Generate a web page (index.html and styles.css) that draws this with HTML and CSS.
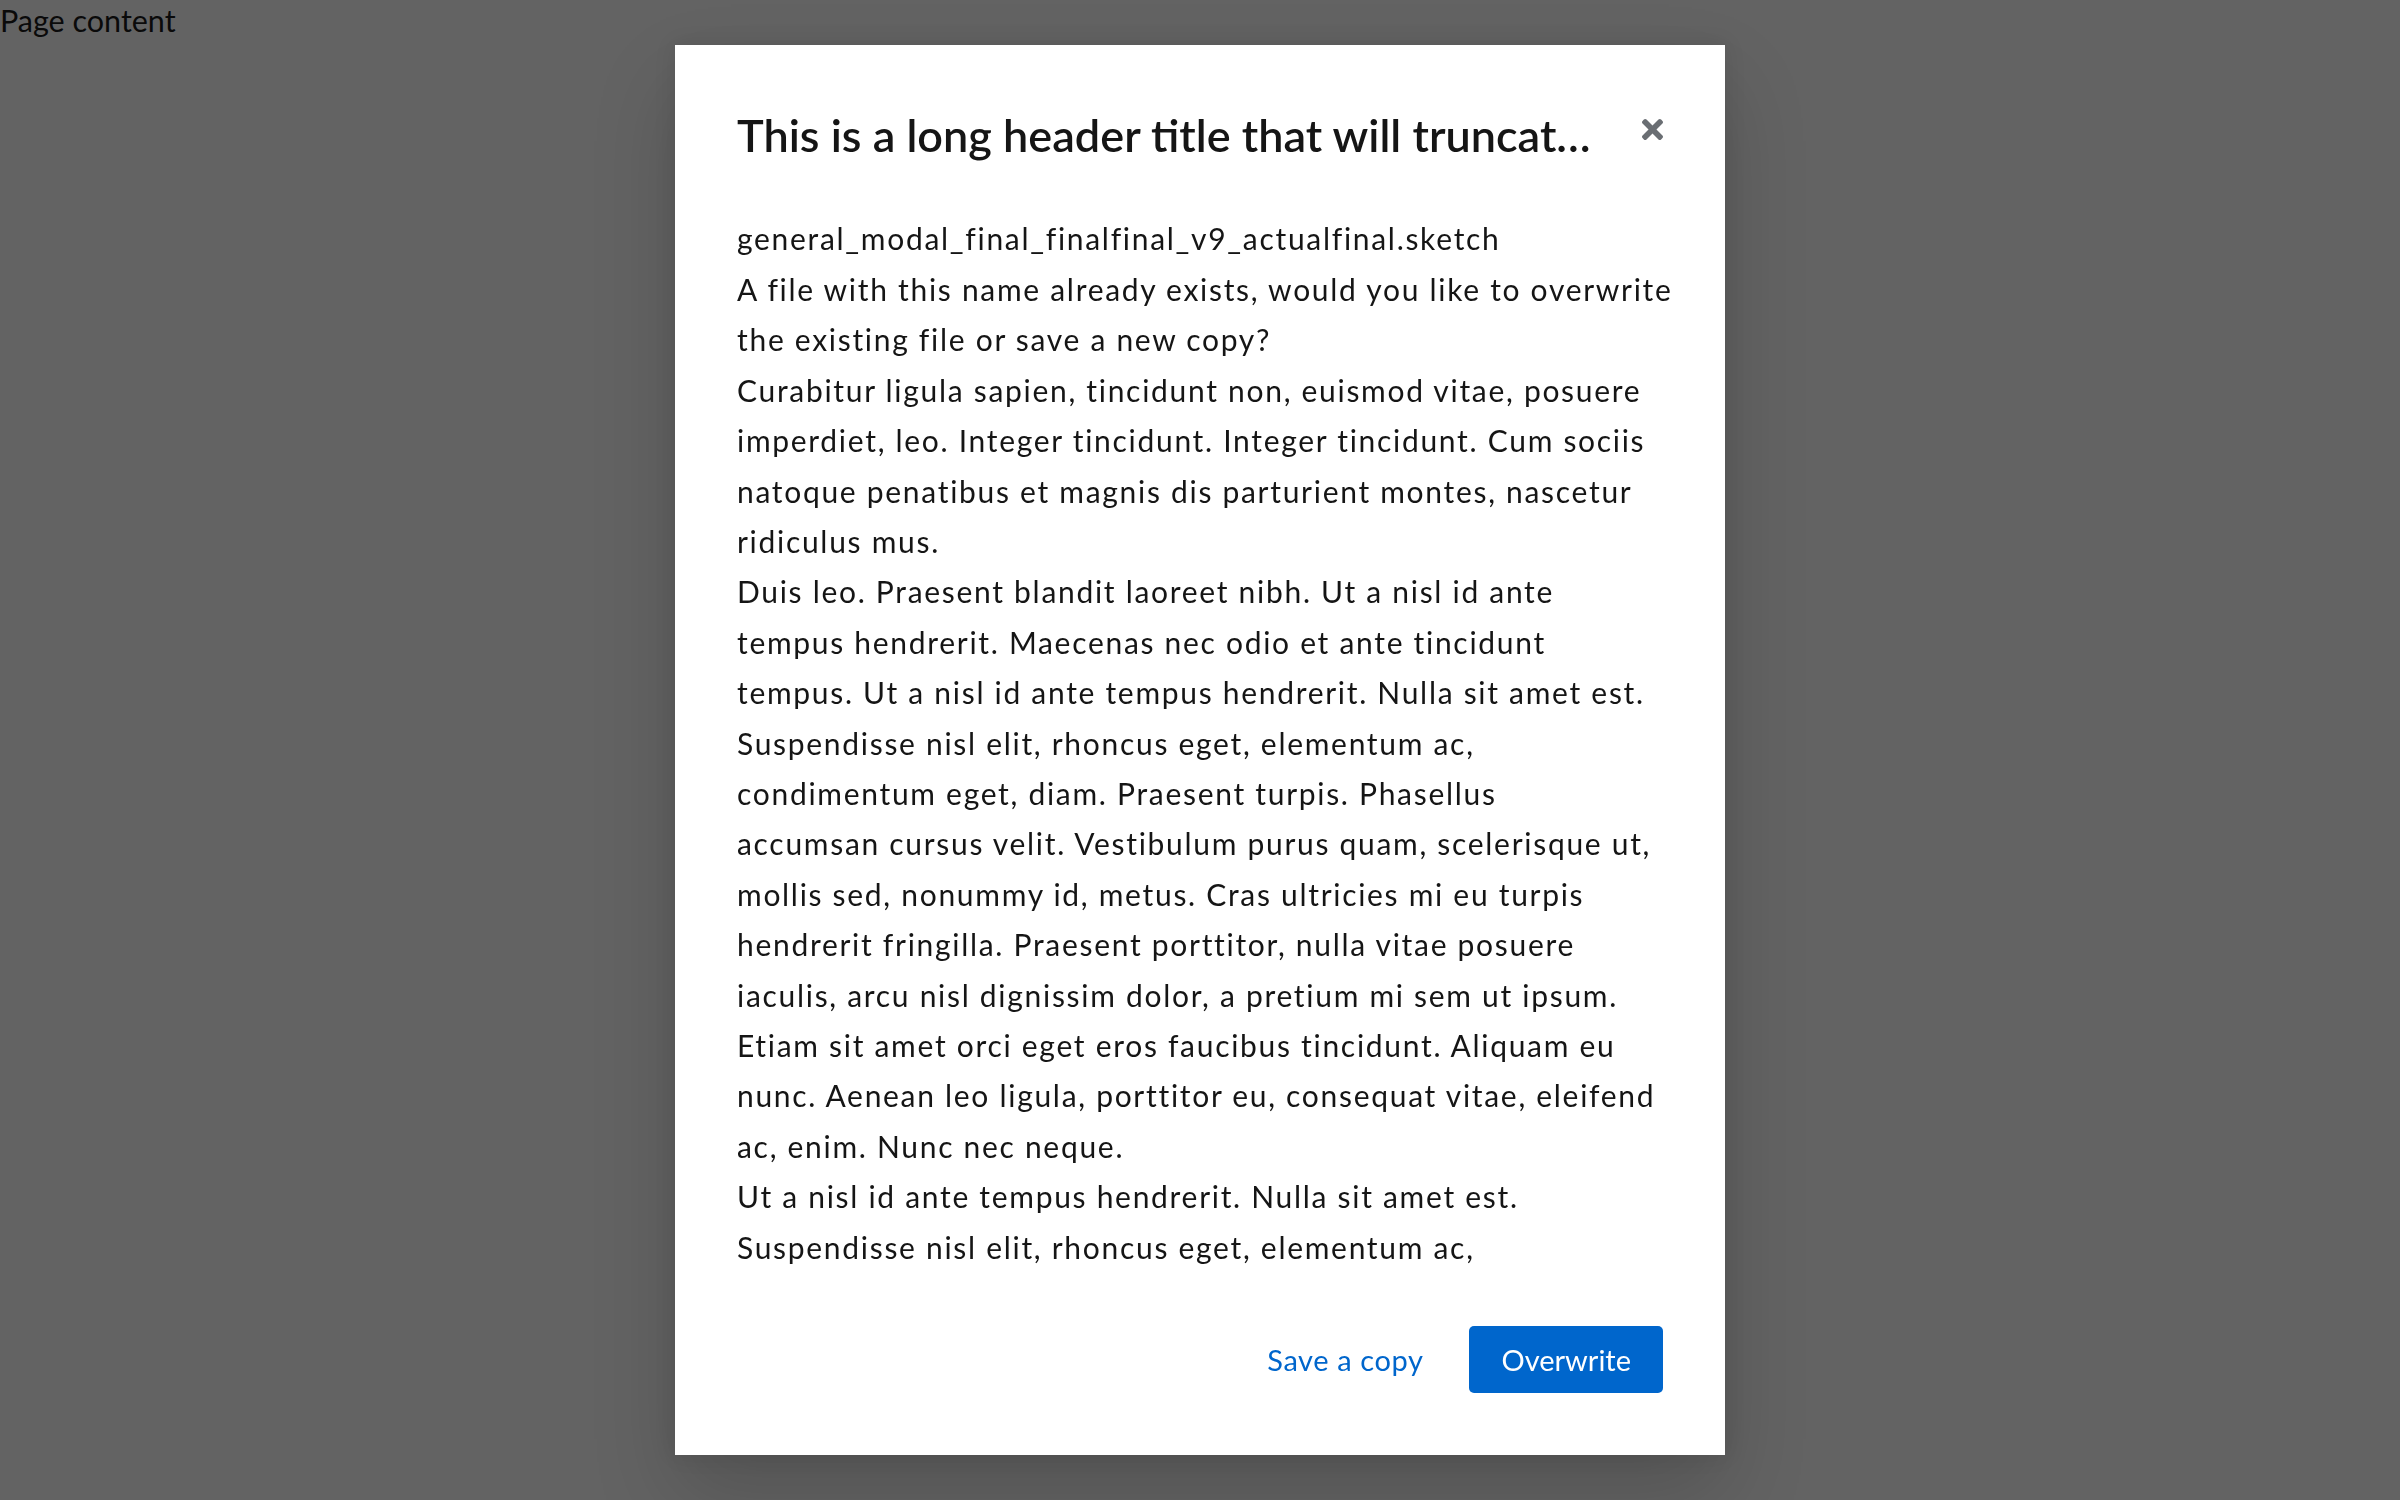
FILE: index.html
```html
<!DOCTYPE html>
<html lang="en">
<head>
<meta charset="utf-8">
<title>Modal</title>
<link rel="stylesheet" href="styles.css">
</head>
<body>
<div class="page">Page content</div>
<div class="backdrop">
  <div class="modal" role="dialog" aria-modal="true" aria-labelledby="modal-title">
    <header class="modal-header">
      <h1 class="modal-title" id="modal-title">This is a long header title that will truncat…</h1>
      <button class="modal-close" aria-label="Close">
        <svg viewBox="0 80 352 352" width="21" height="21" aria-hidden="true"><path fill="currentColor" d="M242.72 256l100.07-100.07c12.28-12.28 12.28-32.19 0-44.48l-22.24-22.24c-12.28-12.28-32.19-12.28-44.48 0L176 189.28 75.93 89.21c-12.28-12.28-32.19-12.28-44.48 0L9.21 111.45c-12.28 12.28-12.28 32.19 0 44.48L109.28 256 9.21 356.07c-12.28 12.28-12.28 32.19 0 44.48l22.24 22.24c12.28 12.28 32.2 12.28 44.48 0L176 322.72l100.07 100.07c12.28 12.28 32.2 12.28 44.48 0l22.24-22.24c12.28-12.28 12.28-32.19 0-44.48L242.72 256z"/></svg>
      </button>
    </header>
    <div class="modal-body">
      <p>general_modal_final_finalfinal_v9_actualfinal.sketch</p>
      <p>A file with this name already exists, would you like to overwrite<br>the existing file or save a new copy?</p>
      <p>Curabitur ligula sapien, tincidunt non, euismod vitae, posuere<br>imperdiet, leo. Integer tincidunt. Integer tincidunt. Cum sociis<br>natoque penatibus et magnis dis parturient montes, nascetur<br>ridiculus mus.</p>
      <p>Duis leo. Praesent blandit laoreet nibh. Ut a nisl id ante<br>tempus hendrerit. Maecenas nec odio et ante tincidunt<br>tempus. Ut a nisl id ante tempus hendrerit. Nulla sit amet est.<br>Suspendisse nisl elit, rhoncus eget, elementum ac,<br>condimentum eget, diam. Praesent turpis. Phasellus<br>accumsan cursus velit. Vestibulum purus quam, scelerisque ut,<br>mollis sed, nonummy id, metus. Cras ultricies mi eu turpis<br>hendrerit fringilla. Praesent porttitor, nulla vitae posuere<br>iaculis, arcu nisl dignissim dolor, a pretium mi sem ut ipsum.<br>Etiam sit amet orci eget eros faucibus tincidunt. Aliquam eu<br>nunc. Aenean leo ligula, porttitor eu, consequat vitae, eleifend<br>ac, enim. Nunc nec neque.</p>
      <p>Ut a nisl id ante tempus hendrerit. Nulla sit amet est.<br>Suspendisse nisl elit, rhoncus eget, elementum ac,</p>
    </div>
    <footer class="modal-footer">
      <button class="btn btn-link">Save a copy</button>
      <button class="btn btn-primary">Overwrite</button>
    </footer>
  </div>
</div>
</body>
</html>
```
FILE: styles.css
```css
html, body {
  margin: 0;
  height: 100%;
}
body {
  font-family: Lato, "Noto Sans", sans-serif;
  color: #151515;
  background: #fff;
}
.page {
  font-size: 30.5px;
  line-height: 40px;
}
.backdrop {
  position: fixed;
  inset: 0;
  background: rgba(3, 3, 3, 0.62);
  display: flex;
  align-items: center;
  justify-content: center;
}
.modal {
  width: 1050px;
  box-sizing: border-box;
  background: #fff;
  padding: 61px 62px 62px;
  box-shadow: 0 40px 80px rgba(3, 3, 3, 0.16), 0 0 20px rgba(3, 3, 3, 0.1);
  display: flex;
  flex-direction: column;
}
.modal-header {
  display: flex;
  align-items: flex-start;
  gap: 40px;
}
.modal-title {
  flex: 1;
  min-width: 0;
  margin: 0;
  font-size: 45px;
  font-weight: 600;
  line-height: 58.5px;
  white-space: nowrap;
  overflow: hidden;
  text-overflow: ellipsis;
}
.modal-close {
  flex: none;
  margin-top: 13px;
  padding: 0;
  border: 0;
  background: none;
  color: #6a6e73;
  width: 21px;
  height: 21px;
  line-height: 0;
}
.modal-body {
  margin-top: 49px;
  font-size: 30px;
  letter-spacing: 1.7px;
  line-height: 50.4px;
  white-space: nowrap;
}
.modal-body p {
  margin: 0;
}
.modal-footer {
  margin-top: 54px;
  display: flex;
  justify-content: flex-end;
  gap: 14px;
}
.btn {
  height: 67px;
  padding: 0 32px;
  border: 0;
  border-radius: 5px;
  font-family: inherit;
  font-size: 29px;
}
.btn-link {
  background: none;
  color: #0066cc;
  letter-spacing: 0.6px;
}
.btn-primary {
  background: #0066cc;
  color: #fff;
}
```
